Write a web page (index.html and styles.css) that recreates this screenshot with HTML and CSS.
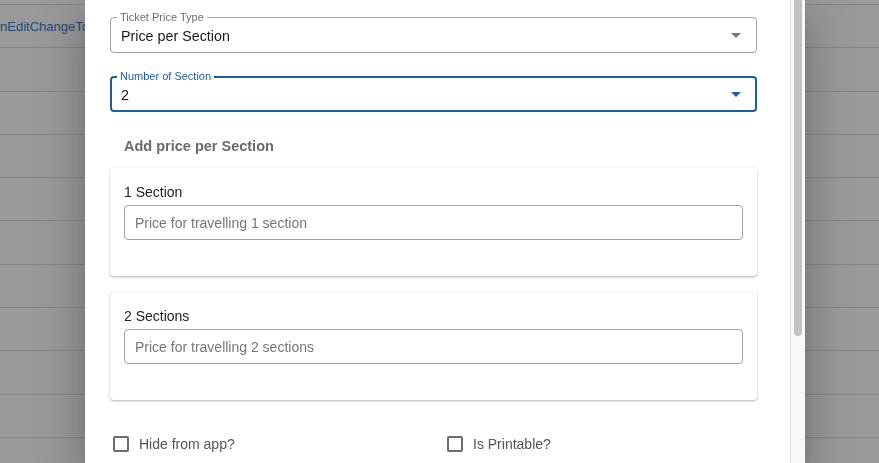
FILE: index.html
```html
<!DOCTYPE html>
<html lang="en">

<head>
    <meta charset="UTF-8">
    <meta name="viewport" content="width=device-width, initial-scale=1.0">
    <title>Edit Ticket Type</title>
    <link rel="stylesheet" href="styles.css">
</head>
<body>
    <div class="table">
        <div class="table-head"></div>
        <div class="table-row"><a class="row-link" href="#">nEditChangeTo</a></div>
        <div class="table-row"></div>
        <div class="table-row"></div>
        <div class="table-row"></div>
        <div class="table-row"></div>
        <div class="table-row"></div>
        <div class="table-row"></div>
        <div class="table-row"></div>
        <div class="table-row"></div>
        <div class="table-row"></div>
        <div class="table-row"></div>
    </div>

    <div class="backdrop"></div>

    <div class="dialog">
        <div class="dialog-body">
            <div class="field">
                <span class="field-label">Ticket Price Type</span>
                <span class="field-value">Price per Section</span>
                <span class="caret"></span>
            </div>

            <div class="field field-focused">
                <span class="field-label">Number of Section</span>
                <span class="field-value">2</span>
                <span class="caret"></span>
            </div>

            <h4 class="section-title">Add price per Section</h4>

            <div class="price-card">
                <label class="price-label">1 Section</label>
                <input class="price-input" type="text" placeholder="Price for travelling 1 section">
            </div>

            <div class="price-card">
                <label class="price-label">2 Sections</label>
                <input class="price-input" type="text" placeholder="Price for travelling 2 sections">
            </div>

            <div class="options">
                <label class="check"><span class="check-box"></span>Hide from app?</label>
                <label class="check"><span class="check-box"></span>Is Printable?</label>
            </div>
        </div>
        <div class="scrollbar">
            <div class="scrollbar-thumb"></div>
        </div>
    </div>
</body>

</html>
```

FILE: styles.css
```css
* {
    box-sizing: border-box;
}

body {
    font-family: "Liberation Sans", Arial, sans-serif;
    margin: 0;
    padding: 0;
    background-color: #ffffff;
    color: #1a1a1a;
    overflow: hidden;
}

/* page behind the dialog */
.table-head {
    height: 5px;
    border-bottom: 1px solid #dfdfdf;
}

.table-row {
    height: 43.3px;
    border-bottom: 1px solid #dfdfdf;
    display: flex;
    align-items: center;
}

.row-link {
    font-size: 13px;
    color: #3a7fcc;
    text-decoration: none;
}

.backdrop {
    position: fixed;
    inset: 0;
    background-color: rgba(0, 0, 0, 0.4);
}

/* dialog */
.dialog {
    position: fixed;
    top: 0;
    left: 85px;
    width: 720px;
    height: 463px;
    background-color: #ffffff;
    overflow: hidden;
    display: flex;
    align-items: stretch;
    box-shadow: 0 11px 15px -7px rgba(0, 0, 0, 0.2),
        0 24px 38px 3px rgba(0, 0, 0, 0.14),
        0 9px 46px 8px rgba(0, 0, 0, 0.12);
}

.dialog-body {
    flex: 1;
    padding: 17px 33px 0 25px;
}

.scrollbar {
    width: 15px;
    flex-shrink: 0;
    background-color: #f8f8f8;
    border-left: 1px solid #e6e6e6;
    padding: 0 3px;
}

.scrollbar-thumb {
    height: 336px;
    background-color: #c1c1c1;
    border-radius: 0 0 4px 4px;
}

/* outlined select */
.field {
    position: relative;
    height: 36px;
    border: 1px solid #a3a3a3;
    border-radius: 4px;
    padding: 0 15px 0 10px;
    display: flex;
    align-items: center;
    justify-content: space-between;
}

.field + .field {
    margin-top: 23px;
}

.field-label {
    position: absolute;
    top: -7px;
    left: 6px;
    padding: 0 3px;
    background-color: #ffffff;
    font-size: 11px;
    line-height: 12px;
    color: #6e6e6e;
}

.field-value {
    font-size: 14.3px;
    line-height: 18px;
    padding-top: 1px;
    color: #1a1a1a;
}

.caret {
    width: 0;
    height: 0;
    border-left: 5px solid transparent;
    border-right: 5px solid transparent;
    border-top: 5px solid #757575;
}

.field-focused {
    border: 2px solid #1d5c9e;
    padding: 0 14px 0 9px;
}

.field-focused .field-label {
    left: 5px;
    top: -8px;
    color: #1d5c9e;
}

.field-focused .caret {
    border-top-color: #1d5c9e;
}

/* section prices */
.section-title {
    margin: 25px 0 13px;
    padding-left: 14px;
    font-size: 14.5px;
    line-height: 18px;
    font-weight: bold;
    color: #6b6b6b;
}

.price-card {
    background-color: #ffffff;
    border-radius: 4px;
    padding: 15px 14px 36px;
    box-shadow: 0 1px 3px rgba(0, 0, 0, 0.25), 0 1px 1px rgba(0, 0, 0, 0.08);
}

.price-card + .price-card {
    margin-top: 16px;
}

.price-label {
    display: block;
    font-size: 14px;
    line-height: 18px;
    color: #222222;
    margin-bottom: 4px;
}

.price-input {
    display: block;
    width: 100%;
    height: 35px;
    border: 1px solid #a3a3a3;
    border-radius: 4px;
    padding: 0 10px;
    font-family: "Liberation Sans", Arial, sans-serif;
    font-size: 14px;
    color: #1a1a1a;
    outline: none;
}

.price-input::placeholder {
    color: #777777;
}

/* checkboxes */
.options {
    display: grid;
    grid-template-columns: 334px 1fr;
    margin-top: 35px;
}

.check {
    display: flex;
    align-items: center;
    gap: 10px;
    padding-left: 3px;
    font-size: 14px;
    line-height: 18px;
    color: #555555;
}

.check-box {
    width: 16px;
    height: 16px;
    border: 2px solid #6b6b6b;
    border-radius: 2px;
}
```
